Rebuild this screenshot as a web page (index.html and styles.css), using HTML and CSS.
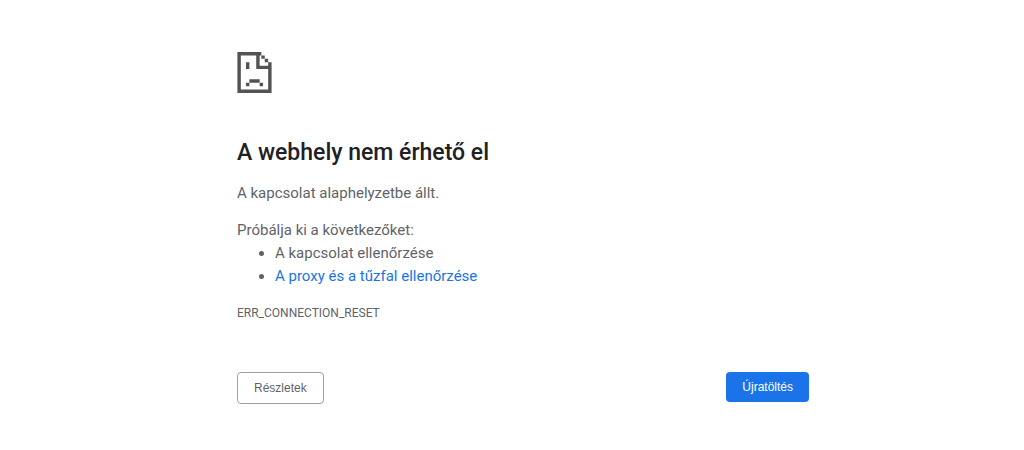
FILE: index.html
```
<!DOCTYPE html>
<html lang="hu">
<head>
<meta charset="UTF-8">
<meta name="viewport" content="width=device-width, initial-scale=1">
<title>A webhely nem érhető el</title>
<link rel="stylesheet" href="styles.css">
</head>
<body>

<main class="error-page">
  <svg class="error-icon" viewBox="0 0 20 24" aria-hidden="true">
    <path d="M0 0h14v2h2v2h2v2h2v18H0zM2 2v20h16V10h-7V2zM13 2v6h5V6h-2V4h-2V2z" fill-rule="evenodd"/>
    <path d="M5 6h2v4H5zM7 16h6v2H7zM5 18h2v2H5zM13 18h2v2h-2z"/>
  </svg>

  <h1>A webhely nem érhető el</h1>
  <p class="summary">A kapcsolat alaphelyzetbe állt.</p>

  <div class="suggestions">
    <p>Próbálja ki a következőket:</p>
    <ul>
      <li>A kapcsolat ellenőrzése</li>
      <li><a href="#buttons">A proxy és a tűzfal ellenőrzése</a></li>
    </ul>
  </div>

  <div class="error-code">ERR_CONNECTION_RESET</div>

  <div class="buttons" id="buttons">
    <button type="button" class="details-button">Részletek</button>
    <button type="button" class="reload-button">Újratöltés</button>
  </div>
</main>

</body>
</html>
```

FILE: styles.css
```
body {
  margin: 0;
  padding-left: 22px;
  background-color: #fff;
  color: #5f6368;
  font-family: Roboto, sans-serif;
  font-size: 15px;
  line-height: 23px;
}
.error-page {
  box-sizing: border-box;
  max-width: 572px;
  margin: 0 auto;
  padding-top: 52px;
}
.error-icon {
  display: block;
  width: 35px;
  height: 41px;
  fill: #535353;
}
h1 {
  margin: 46px 0 15px;
  color: #202124;
  font-size: 23px;
  font-weight: 500;
  line-height: 28px;
}
p {
  margin: 0;
}
.suggestions {
  margin-top: 14px;
}
ul {
  margin: 0;
  padding-left: 38px;
}
a {
  color: #1a73e8;
  text-decoration: none;
}
.error-code {
  margin-top: 14px;
  font-size: 12px;
}
.buttons {
  display: flex;
  justify-content: space-between;
  align-items: flex-start;
  margin-top: 47px;
}
button {
  padding: 0 16px;
  border-radius: 4px;
  font-family: "Liberation Sans", Arial, sans-serif;
  font-size: 12px;
  cursor: pointer;
}
.details-button {
  border: 1px solid #9aa0a6;
  background-color: #fff;
  color: #5f6368;
  line-height: 30px;
}
.reload-button {
  border: none;
  background-color: #1a73e8;
  color: #fff;
  line-height: 30px;
}
```
